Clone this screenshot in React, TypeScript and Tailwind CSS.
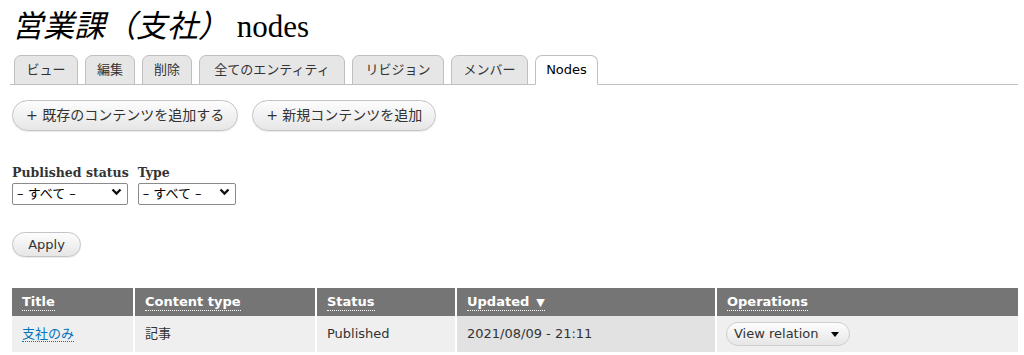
const sans = { fontFamily: '"DejaVu Sans", "Noto Sans CJK JP", sans-serif' };

const tabs = [
  { label: 'ビュー', w: 'w-[64px]' },
  { label: '編集', w: 'w-[50px]' },
  { label: '削除', w: 'w-[50px]' },
  { label: '全てのエンティティ', w: 'w-[146px]' },
  { label: 'リビジョン', w: 'w-[92px]' },
  { label: 'メンバー', w: 'w-[77px]' },
];

function Pill({ children, className = '' }: { children: React.ReactNode; className?: string }) {
  return (
    <button
      className={`rounded-full border border-[#c4c4c4] bg-gradient-to-b from-[#fdfdfd] to-[#e6e6e6] text-[#333] shadow-[0_1px_1px_rgba(0,0,0,0.08)] ${className}`}
    >
      {children}
    </button>
  );
}

function Select({ w }: { w: string }) {
  return (
    <div className={`relative mt-[1px] ${w}`}>
      <select
        className="h-[22px] w-full appearance-none rounded-[2px] border border-[#8a8a8a] bg-white pl-[4px] text-[13px] text-black"
        style={sans}
      >
        <option>– すべて –</option>
      </select>
      <svg
        className="pointer-events-none absolute right-[6px] top-[7px]"
        width="11"
        height="8"
        viewBox="0 0 11 8"
      >
        <path d="M1.5 1.5 L5.5 5.5 L9.5 1.5" fill="none" stroke="#111" strokeWidth="2.4" />
      </svg>
    </div>
  );
}

function Th({ children, w, sorted }: { children: React.ReactNode; w: string; sorted?: boolean }) {
  return (
    <th className={`${w} px-[10px] text-left text-[13px] font-bold text-white`}>
      <span className="border-b border-dotted border-white pb-[1px]">
        {children}
        {sorted && <span className="ml-[7px] text-[11px]">▼</span>}
      </span>
    </th>
  );
}

export default function App() {
  return (
    <div className="min-h-[355px] bg-white pl-[12px] pr-[6px] text-[#333]" style={sans}>
      <h1
        className="pt-[9px] text-[31px] leading-[36px] text-black"
        style={{ fontFamily: '"Liberation Serif", "Noto Sans CJK JP", serif' }}
      >
        <span className="italic">営業課（支社）</span> nodes
      </h1>

      <div className="mt-[10px] -ml-[2px] flex items-end gap-[7px] border-b border-[#bfbfbf] pl-[4px]">
        {tabs.map((t) => (
          <div
            key={t.label}
            className={`-mb-px h-[30px] ${t.w} rounded-t-[7px] border border-[#bfbfbf] bg-[#e6e6e6] text-center text-[13px] leading-[28px] text-[#333]`}
          >
            {t.label}
          </div>
        ))}
        <div className="-mb-px h-[30px] w-[63px] rounded-t-[7px] border border-b-white border-[#bfbfbf] bg-white text-center text-[13px] leading-[28px] text-black">
          Nodes
        </div>
      </div>

      <div className="mt-[15px] flex gap-[14px]">
        <Pill className="h-[31px] px-[13px] text-[14px]">+ 既存のコンテンツを追加する</Pill>
        <Pill className="h-[31px] px-[13px] text-[14px]">+ 新規コンテンツを追加</Pill>
      </div>

      <div className="mt-[34px] flex gap-[9px]" style={{ fontFamily: '"DejaVu Serif", "Liberation Serif", serif' }}>
        <div className="flex flex-col">
          <label className="text-[12.5px] font-bold leading-[15px] text-[#333]">Published status</label>
          <Select w="w-[116px]" />
        </div>
        <div className="flex flex-col">
          <label className="text-[12.5px] font-bold leading-[15px] text-[#333]">Type</label>
          <Select w="w-[98px]" />
        </div>
      </div>

      <Pill className="mt-[27px] h-[25px] w-[69px] text-[13px]">Apply</Pill>

      <table className="mt-[31px] w-full border-collapse">
        <thead>
          <tr className="h-[28px] bg-[#757575]">
            <Th w="w-[122px]">Title</Th>
            <Th w="w-[182px] border-l-2 border-white">Content type</Th>
            <Th w="w-[140px] border-l-2 border-white">Status</Th>
            <Th w="w-[260px] border-l-2 border-white" sorted>
              Updated
            </Th>
            <Th w="border-l-2 border-white">
              <span className="-mb-px inline-block border-b border-[#757575]">Operations</span>
            </Th>
          </tr>
        </thead>
        <tbody>
          <tr className="h-[36px] bg-[#efefef] text-[13px]">
            <td className="px-[10px]">
              <a className="border-b border-dotted border-[#0074bd] text-[#0074bd]">支社のみ</a>
            </td>
            <td className="border-l-2 border-white px-[10px]">記事</td>
            <td className="border-l-2 border-white px-[10px]">Published</td>
            <td className="border-l-2 border-white bg-[#e2e2e2] px-[10px]">2021/08/09 - 21:11</td>
            <td className="border-l-2 border-white px-[9px]">
              <div className="flex h-[24px] w-[124px] items-center rounded-full border border-[#cfcfcf] bg-gradient-to-b from-[#fdfdfd] to-[#e6e6e6] text-[13px]">
                <span className="pl-[7px] text-[#333]">View relation</span>
                <span className="ml-auto flex h-full w-[28px] items-center justify-center">
                  <span className="h-0 w-0 border-x-[4px] border-t-[5px] border-x-transparent border-t-black" />
                </span>
              </div>
            </td>
          </tr>
        </tbody>
      </table>
    </div>
  );
}
